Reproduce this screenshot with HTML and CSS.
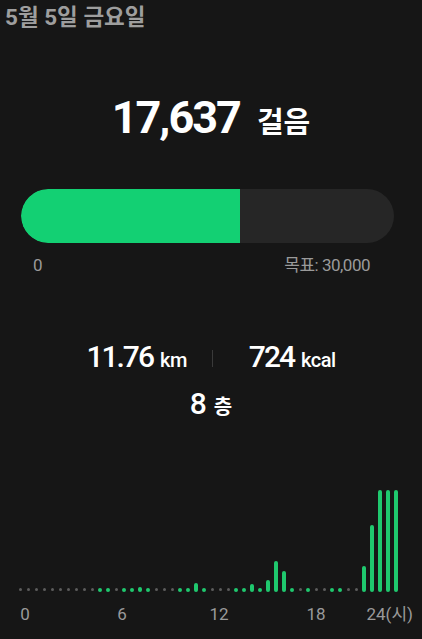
FILE: index.html
```html
<!DOCTYPE html>
<html lang="ko">
<head>
  <meta charset="UTF-8" />
  <meta name="viewport" content="width=device-width, initial-scale=1" />
  <title>걸음 수</title>
  <link rel="stylesheet" href="styles.css">
</head>
<body>
  <div id="screen">
    <h2 class="date">5월 5일 금요일</h2>

    <div class="steps">
      <span class="steps-num">17,637</span>
      <span class="steps-unit">걸음</span>
    </div>

    <div class="track">
      <div class="fill" style="width: 58.79%"></div>
    </div>
    <div class="track-labels">
      <span>0</span>
      <span>목표: 30,000</span>
    </div>

    <div class="stats">
      <div class="stat"><span class="stat-num">11.76</span><span class="stat-unit">km</span></div>
      <div class="divider"></div>
      <div class="stat"><span class="stat-num">724</span><span class="stat-unit">kcal</span></div>
    </div>
    <div class="floors">
      <span class="stat-num">8</span><span class="floor-unit">층</span>
    </div>

    <div id="chart"></div>
    <div class="axis">
      <span class="tick">0</span>
      <span class="tick">6</span>
      <span class="tick">12</span>
      <span class="tick">18</span>
      <span class="tick last">24(시)</span>
    </div>
  </div>

  <script>
    // steps per half hour, 0 = no steps (grey dot)
    const heights = [
      0, 0, 0, 0, 0, 0, 0, 0, 0, 0,
      4, 4, 0, 4, 4, 5, 4, 0, 0, 0,
      4, 4, 9, 4, 0, 0, 0, 4, 4, 8,
      4, 12, 31, 21, 4, 0, 4, 0, 0, 4,
      4, 0, 0, 26, 67, 102, 102, 102
    ];
    const chart = document.getElementById('chart');
    heights.forEach((h) => {
      const slot = document.createElement('div');
      slot.className = 'slot';
      const bar = document.createElement('div');
      if (h === 0) {
        bar.className = 'dot';
      } else {
        bar.className = 'bar';
        bar.style.height = h + 'px';
      }
      slot.appendChild(bar);
      chart.appendChild(slot);
    });
  </script>
</body>
</html>
```

FILE: styles.css
```css
body, html {
  margin: 0;
  padding: 0;
  background: #161616;
  font-family: Roboto, 'Noto Sans CJK KR', sans-serif;
  color: #ffffff;
}
#screen {
  width: 422px;
  height: 639px;
  overflow: hidden;
  display: flex;
  flex-direction: column;
}
.date {
  margin: 0;
  padding: 0 0 0 5px;
  font-size: 22.5px;
  line-height: 34px;
  font-weight: 700;
  color: #9e9e9e;
}
.steps {
  margin-top: 62px;
  display: flex;
  justify-content: center;
  align-items: baseline;
  gap: 17px;
  line-height: 44px;
}
.steps-num {
  font-size: 45px;
  font-weight: 700;
  letter-spacing: -2px;
}
.steps-unit {
  font-size: 29px;
  font-weight: 700;
}
.track {
  margin: 44px 28px 0 21px;
  height: 54px;
  border-radius: 27px;
  background: #262626;
  overflow: hidden;
}
.fill {
  height: 100%;
  background: #13d073;
  border-radius: 27px 0 0 27px;
}
.track-labels {
  display: flex;
  justify-content: space-between;
  padding: 12px 52px 0 33px;
  font-size: 17px;
  line-height: 20px;
  color: #9a9a9a;
  letter-spacing: -0.5px;
}
.stats {
  margin-top: 66px;
  display: flex;
  justify-content: center;
  align-items: center;
  line-height: 32px;
}
.stat {
  display: flex;
  align-items: baseline;
  gap: 7px;
}
.stat-num {
  font-size: 30px;
  font-weight: 500;
  letter-spacing: -2px;
}
.stat-unit {
  font-size: 20px;
  font-weight: 500;
  letter-spacing: -0.5px;
}
.divider {
  width: 1px;
  height: 17px;
  margin: 0 36px 0 25px;
  background: #3a3a3a;
}
.floors {
  margin-top: 12px;
  display: flex;
  justify-content: center;
  align-items: baseline;
  gap: 9px;
  line-height: 32px;
}
.floor-unit {
  font-size: 20px;
  font-weight: 700;
}
#chart {
  margin-top: 65px;
  height: 104px;
  padding-left: 16px;
  display: flex;
  align-items: flex-end;
}
.slot {
  width: 8px;
  display: flex;
  justify-content: center;
  align-items: flex-end;
}
.bar {
  width: 4px;
  border-radius: 2px;
  background: #1fc86e;
}
.dot {
  width: 3px;
  height: 3px;
  margin-bottom: 1px;
  border-radius: 50%;
  background: #5c5c5c;
}
.axis {
  display: flex;
  justify-content: space-between;
  padding: 12px 9px 0 25px;
  font-size: 17px;
  line-height: 20px;
  color: #9a9a9a;
}
.tick {
  width: 0;
  display: flex;
  justify-content: center;
  white-space: nowrap;
}
.tick.last {
  justify-content: flex-end;
}
```
